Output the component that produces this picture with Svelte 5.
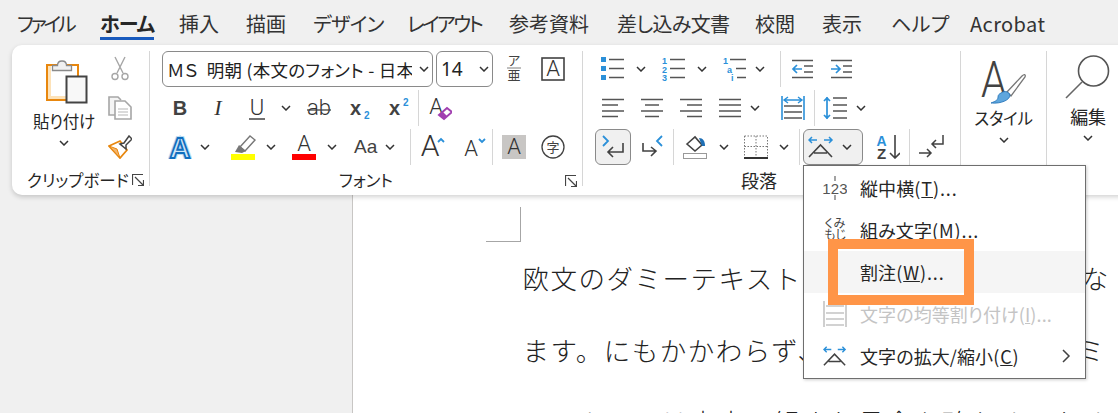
<script>
	// ink widths differ a lot per tab, so each one carries its own slot and tracking
	const tabs = [
		{ t: 'ファイル', w: 83, ls: -3.2 },
		{ t: 'ホーム', w: 79, ls: -1 },
		{ t: '挿入', w: 67, ls: 0 },
		{ t: '描画', w: 67, ls: 0 },
		{ t: 'デザイン', w: 94, ls: -0.6 },
		{ t: 'レイアウト', w: 102, ls: -2.6 },
		{ t: '参考資料', w: 108, ls: 0 },
		{ t: '差し込み文書', w: 138, ls: -0.7 },
		{ t: '校閲', w: 67, ls: 0 },
		{ t: '表示', w: 69, ls: 0 },
		{ t: 'ヘルプ', w: 79, ls: 0.5 },
		{ t: 'Acrobat', w: 90, ls: 0.4 }
	];
</script>

{#snippet chev()}
	<svg class="chev" width="10" height="6" viewBox="0 0 10 6"><path d="M1 1l4 4 4-4" fill="none" stroke="#333" stroke-width="1.5" /></svg>
{/snippet}

{#snippet launcher()}
	<svg class="launcher" width="12" height="12" viewBox="0 0 12 12"><path d="M.5 11V.5H11M3 3l8 8M11.5 6v5.5H6" fill="none" stroke="#444" stroke-width="1.2" /></svg>
{/snippet}

{#snippet lines(ys, x1, x2)}
	{#each ys as y}<path d="M{x1} {y}H{x2}" stroke="#555" stroke-width="1.5" />{/each}
{/snippet}

{#snippet letter(ch, cls = 'glyph', x = 12, y = 19)}
	<text {x} {y} class={cls} text-anchor="middle">{ch}</text>
{/snippet}

{#snippet wideA()}
	<path d="M1 5h8M4 2L1 5l3 3M24 5h-8M21 2l3 3-3 3" fill="none" stroke="#2b90d9" stroke-width="1.5" />
	<path d="M1 22L12.5 10 24 22M6 18h13" fill="none" stroke="#424242" stroke-width="1.6" />
{/snippet}

<div class="app">
	<nav class="tabs">
		{#each tabs as tab, i}
			<span class="slot" style:width="{tab.w}px">
				<span class="tab" class:active={i === 1} style:letter-spacing="{tab.ls}px">{tab.t}</span>
			</span>
		{/each}
	</nav>

	<div class="ribbon">
		<section class="group clip">
			<div class="body">
				<div class="big">
					<svg class="paste" width="42" height="46" viewBox="0 0 42 46">
						<rect x="1" y="7" width="31" height="35" fill="#fff" stroke="#e8870e" stroke-width="2" />
						<path d="M2 8h3v30h16v3H2z" fill="#fde2b8" />
						<path d="M6.5 12.5V7.5h5c0-6 9-6 9 0h5v5z" fill="#f0f0f0" stroke="#8a8a8a" stroke-width="1.3" />
						<rect x="20.5" y="18.5" width="20" height="26" fill="#f8f8f8" stroke="#444" stroke-width="2" />
					</svg>
					<span class="biglabel">貼り付け</span>
					{@render chev()}
				</div>
				<div class="small">
					<div class="row">
						<svg width="24" height="26" viewBox="0 0 24 26">
							<path d="M7 1l8 16M17 1L9 17" fill="none" stroke="#a6a6a6" stroke-width="1.4" />
							<circle cx="7" cy="20.5" r="3" fill="none" stroke="#a6a6a6" stroke-width="1.4" />
							<circle cx="17" cy="20.5" r="3" fill="none" stroke="#a6a6a6" stroke-width="1.4" />
						</svg>
					</div>
					<div class="row">
						<svg width="24" height="24" viewBox="0 0 24 24">
							<path d="M8 19H1V1h9l3 3" fill="#f4f4f4" stroke="#a6a6a6" stroke-width="1.6" />
							<path d="M7 5h10l6 6v12H7z" fill="#fff" stroke="#a6a6a6" stroke-width="1.6" />
							<path d="M10 13h10M10 16h10M10 19h10" stroke="#b5b5b5" stroke-width="1.2" />
						</svg>
					</div>
					<div class="row">
						<svg width="24" height="24" viewBox="0 0 24 24">
							<path d="M1 11l11-5 7 9-7 8z" fill="#fff" stroke="#e8870e" stroke-width="1.8" />
							<path d="M1 11l11 12-3-9z" fill="#f4b46c" stroke="#e8870e" stroke-width="1" />
							<path d="M12 9l4-1 5-7 3 3-6 6 0 4z" fill="#fff" stroke="#444" stroke-width="1.5" />
						</svg>
					</div>
				</div>
			</div>
			<div class="label"><span class="cliplabel">クリップボード</span>{@render launcher()}</div>
		</section>

		<section class="group font">
			<div class="row">
				<div class="select fontname m12"><span>ＭＳ&nbsp; 明朝 (本文のフォント - 日本語)</span>{@render chev()}</div>
				<div class="select fontsize m3"><span>14</span>{@render chev()}</div>
				<svg class="m14" width="14" height="30" viewBox="0 0 14 30">
					<text x="7" y="11" class="tiny" text-anchor="middle">ア</text>
					<path d="M0 14h14" stroke="#aaa" stroke-width="1.5" />
					<text x="7" y="26" class="tiny" text-anchor="middle">亜</text>
				</svg>
				<svg class="m20" width="24" height="24" viewBox="0 0 24 24">
					<rect x="1" y="1" width="22" height="22" fill="none" stroke="#424242" stroke-width="1.6" />
					{@render letter('A')}
				</svg>
			</div>
			<div class="row">
				<svg class="m18" width="24" height="24" viewBox="0 0 24 24">{@render letter('B', 'glyph bold')}</svg>
				<svg class="m14" width="24" height="24" viewBox="0 0 24 24">{@render letter('I', 'glyph ital')}</svg>
				<svg class="m15" width="24" height="24" viewBox="0 0 24 24">{@render letter('U')}<path d="M4 23h16" stroke="#424242" stroke-width="1.5" /></svg>
				<span class="m12">{@render chev()}</span>
				<svg class="m16" width="24" height="24" viewBox="0 0 24 24">{@render letter('ab')}<path d="M0 14h24" stroke="#424242" stroke-width="1.3" /></svg>
				<svg class="m18" width="24" height="24" viewBox="0 0 24 24">
					<text x="1" y="19" class="glyph bold">x</text><text x="15" y="23" class="sub">2</text>
				</svg>
				<svg class="m15" width="24" height="24" viewBox="0 0 24 24">
					<text x="1" y="19" class="glyph bold">x</text><text x="15" y="10" class="sub">2</text>
				</svg>
				<i class="sep m6"></i>
				<svg class="m9" width="24" height="26" viewBox="0 0 24 26">
					{@render letter('A', 'glyph', 8, 19)}
					<path d="M11 20l8-7 5 4-8 7z" fill="#fff" stroke="#a13fb0" stroke-width="2" />
					<path d="M11 20l4-3 4 4-3 3z" fill="#a13fb0" />
				</svg>
			</div>
			<div class="row">
				<svg class="m18" width="24" height="24" viewBox="0 0 24 24">
					<text x="12" y="22.5" class="halo" text-anchor="middle">A</text>
					<text x="12" y="22.5" class="outline" text-anchor="middle">A</text>
				</svg>
				<span class="m8">{@render chev()}</span>
				<svg class="m21" width="25" height="26" viewBox="0 0 25 26">
					<path d="M9 13L19 2l5 4-10 11z" fill="#fff" stroke="#777" stroke-width="1.4" />
					<path d="M4 18l4-7 7 6-4 2z" fill="#777" />
					<rect y="20" width="24" height="6" fill="#ffff00" />
				</svg>
				<span class="m10">{@render chev()}</span>
				<svg class="m16" width="24" height="26" viewBox="0 0 24 26">
					{@render letter('A', 'glyph', 12, 17)}
					<rect y="20" width="24" height="6" fill="#ff0000" />
				</svg>
				<span class="m11">{@render chev()}</span>
				<span class="aa m17">Aa</span>
				<span class="m7">{@render chev()}</span>
				<i class="sep m15"></i>
				<svg class="m10" width="24" height="24" viewBox="0 0 24 24">
					{@render letter('A', 'glyph large', 9, 21)}
					<path d="M17 7l3-3 3 3" fill="none" stroke="#2b90d9" stroke-width="1.8" />
				</svg>
				<svg class="m17" width="24" height="24" viewBox="0 0 24 24">
					{@render letter('A', 'glyph', 9, 21)}
					<path d="M17 4l3 3 3-3" fill="none" stroke="#2b90d9" stroke-width="1.8" />
				</svg>
				<i class="sep m6"></i>
				<svg class="m9" width="24" height="24" viewBox="0 0 24 24">
					<rect width="24" height="24" fill="#c8c6c4" />
					{@render letter('A', 'glyph', 12, 19)}
				</svg>
				<svg class="m15" width="24" height="24" viewBox="0 0 24 24">
					<circle cx="12" cy="12" r="11" fill="none" stroke="#424242" stroke-width="1.3" />
					<text x="12" y="17" class="tiny" text-anchor="middle">字</text>
				</svg>
			</div>
			<div class="label center"><span>フォント</span>{@render launcher()}</div>
		</section>

		<section class="group para">
			<div class="row">
				<svg class="m18" width="24" height="24" viewBox="0 0 24 24">
					<rect y="0" width="5" height="5" fill="#2b90d9" /><rect y="9" width="5" height="5" fill="#2b90d9" /><rect y="18" width="5" height="5" fill="#2b90d9" />
					{@render lines([2.5, 11.5, 20.5], 8, 23)}
				</svg>
				<span class="m11">{@render chev()}</span>
				<svg class="m16" width="24" height="24" viewBox="0 0 24 24">
					<text x="0" y="7" class="num">1</text><text x="0" y="16" class="num">2</text><text x="0" y="24" class="num">3</text>
					{@render lines([2.5, 11.5, 20.5], 8, 23)}
				</svg>
				<span class="m11">{@render chev()}</span>
				<svg class="m16" width="24" height="24" viewBox="0 0 24 24">
					<text x="0" y="7" class="num">1</text><text x="4" y="16" class="num">a</text><text x="8" y="24" class="num">i</text>
					{@render lines([2.5], 7, 23)}{@render lines([11.5], 13, 23)}{@render lines([20.5], 14, 23)}
				</svg>
				<span class="m8">{@render chev()}</span>
				<i class="sep m15"></i>
				<svg class="m10" width="24" height="20" viewBox="0 0 24 20">
					{@render lines([1.5, 18.5], 1, 22)}{@render lines([7, 13], 13, 22)}
					<path d="M11 10H2M6 6l-4 4 4 4" fill="none" stroke="#2b90d9" stroke-width="1.7" />
				</svg>
				<svg class="m15" width="24" height="20" viewBox="0 0 24 20">
					{@render lines([1.5, 18.5], 1, 22)}{@render lines([7, 13], 13, 22)}
					<path d="M1 10h9M6 6l4 4-4 4" fill="none" stroke="#2b90d9" stroke-width="1.7" />
				</svg>
			</div>
			<div class="row">
				<svg class="m18" width="24" height="20" viewBox="0 0 24 20">{@render lines([1.5, 13], 1, 23)}{@render lines([7, 18.5], 1, 17)}</svg>
				<svg class="m15" width="24" height="20" viewBox="0 0 24 20">{@render lines([1.5, 13], 1, 23)}{@render lines([7, 18.5], 5, 19)}</svg>
				<svg class="m15" width="24" height="20" viewBox="0 0 24 20">{@render lines([1.5, 13], 1, 23)}{@render lines([7, 18.5], 8, 23)}</svg>
				<svg class="m15" width="24" height="20" viewBox="0 0 24 20">{@render lines([1.5, 7, 13, 18.5], 1, 23)}</svg>
				<span class="m8">{@render chev()}</span>
				<svg class="m21" width="24" height="24" viewBox="0 0 24 24">
					<path d="M1 0v24M23 0v24" stroke="#2b90d9" stroke-width="1.6" />
					{@render lines([10, 16, 22], 3, 21)}
					<path d="M3 4h18M7 1L3 4l4 3M17 1l4 3-4 3" fill="none" stroke="#2b90d9" stroke-width="1.4" />
				</svg>
				<i class="sep m9"></i>
				<svg class="m8" width="24" height="24" viewBox="0 0 24 24">
					<path d="M4 1v22M1 5l3-3 3 3M1 19l3 3 3-3" fill="none" stroke="#2b90d9" stroke-width="1.7" />
					{@render lines([2, 9, 15, 22], 10, 24)}
				</svg>
				<span class="m9">{@render chev()}</span>
			</div>
			<div class="row">
				<div class="pressed square m12">
					<svg width="24" height="24" viewBox="0 0 24 24">
						<path d="M2 1l5 5-5 5" fill="none" stroke="#2b90d9" stroke-width="1.8" />
						<path d="M22 8v9H7M12 12l-5 5 5 5" fill="none" stroke="#424242" stroke-width="1.6" />
					</svg>
				</div>
				<svg class="m9" width="24" height="24" viewBox="0 0 24 24">
					<path d="M22 1l-5 5 5 5" fill="none" stroke="#2b90d9" stroke-width="1.8" />
					<path d="M3 8v8h13M11 12l5 4-5 5" fill="none" stroke="#424242" stroke-width="1.6" />
				</svg>
				<i class="sep m9"></i>
				<svg class="m9" width="25" height="24" viewBox="0 0 25 24">
					<path d="M4 9l8-7 7 8-7 6z" fill="#fff" stroke="#424242" stroke-width="1.6" />
					<path d="M16 3c4 0 6 3 6 8h-3z" fill="#1e6fb5" />
					<rect x=".5" y="18.5" width="23" height="5" fill="#fff" stroke="#999" />
				</svg>
				<span class="m11">{@render chev()}</span>
				<svg class="m15" width="24" height="24" viewBox="0 0 24 24">
					<path d="M.5 1h23v21M.5 1v21M12 1v21M.5 11.5h23" fill="none" stroke="#777" stroke-dasharray="1.5 1.5" />
					<path d="M0 23h24" stroke="#333" stroke-width="2" />
				</svg>
				<span class="m11">{@render chev()}</span>
				<i class="sep m10"></i>
				<div class="dropdown m3">
					<div class="pressed wide">
						<svg width="26" height="24" viewBox="0 0 26 24">{@render wideA()}</svg>
						{@render chev()}
					</div>
					<div class="menu">
						<div class="item">
							<svg width="24" height="24" viewBox="0 0 24 24">
								<path d="M12 0v5M12 19v5" stroke="#666" stroke-width="1.2" />
								<text x="12" y="18" class="menu123" text-anchor="middle">123</text>
							</svg>
							<span>縦中横<span class="key">(<u>T</u>)...</span></span>
						</div>
						<div class="item">
							<svg width="24" height="26" viewBox="0 0 24 26">
								<text x="12" y="10.5" class="kumi" text-anchor="middle">くみ</text>
								<text x="12" y="22" class="kumi" text-anchor="middle">もじ</text>
							</svg>
							<span>組み文字<span class="key">(<u>M</u>)...</span></span>
						</div>
						<div class="item hover"><span class="noicon">割注<span class="key">(<u>W</u>)...</span></span></div>
						<div class="item disabled">
							<svg width="24" height="26" viewBox="0 0 24 26">
								<path d="M1 0v26M23 0v26" stroke="#c4c4c4" stroke-width="1.6" />
								<path d="M3 5h18M3 12h18M3 18h18M3 24h18" stroke="#c4c4c4" stroke-width="1.5" />
							</svg>
							<span>文字の均等割り付け(<u>I</u>)...</span>
						</div>
						<div class="item">
							<svg width="24" height="24" viewBox="0 0 26 24">{@render wideA()}</svg>
							<span>文字の拡大/縮小<span class="key">(<u>C</u>)</span></span>
							<svg class="more" width="9" height="14" viewBox="0 0 9 14"><path d="M1 1l6 6-6 6" fill="none" stroke="#424242" stroke-width="1.5" /></svg>
						</div>
						<div class="callout"></div>
					</div>
				</div>
				<svg class="m13" width="24" height="24" viewBox="0 0 24 24">
					<text x="5.5" y="10.5" class="sortA" text-anchor="middle">A</text>
					<text x="5.5" y="24" class="sortZ" text-anchor="middle">Z</text>
					<path d="M19 0v23M14 18l5 5 5-5" fill="none" stroke="#424242" stroke-width="1.6" />
				</svg>
				<i class="sep m9"></i>
				<svg class="m9" width="26" height="24" viewBox="0 0 26 24">
					<path d="M24 0v9H13M17 5l-4 4 4 4" fill="none" stroke="#424242" stroke-width="1.5" />
					<path d="M0 18h12M8 14l4 4-4 4" fill="none" stroke="#424242" stroke-width="1.5" />
				</svg>
			</div>
			<div class="label"><span class="paralabel">段落</span></div>
		</section>

		<section class="group tall styles">
			<svg class="styleicon" width="48" height="48" viewBox="0 0 48 48">
				<text x="17" y="37" class="bigA" text-anchor="middle" transform="scale(.82 1)">A</text>
				<path d="M27 32L42 16c2-2 4-2 3 1L31 36z" fill="#fff" stroke="#777" stroke-width="1.3" />
				<path d="M21 33c4-3 8-1 9 2 0 5-9 9-19 8 5-2 7-3 7-6 0-2 1-3 3-4z" fill="#5ea6dd" stroke="#1e6fb5" stroke-width=".8" />
			</svg>
			<span class="biglabel">スタイル</span>
			{@render chev()}
		</section>

		<section class="group tall edit">
			<svg class="searchicon" width="46" height="45" viewBox="0 0 46 45">
				<circle cx="28.5" cy="16" r="15" fill="none" stroke="#555" stroke-width="1.6" />
				<path d="M17 27L1 43" stroke="#666" stroke-width="1.6" />
			</svg>
			<span class="biglabel editlabel">編集</span>
			{@render chev()}
		</section>
	</div>

	<main class="below">
		<div class="gutter"></div>
		<div class="page">
			<div class="cropmark"></div>
			<p>欧文のダミーテキストは意味のない文章ですな</p>
			<p>ます。にもかかわらず、独特の雰囲気ありダミ</p>
			<p>ーテキストは文字の組まれ具合を確かめるために</p>
		</div>
	</main>
</div>

<style>
	:global(body) {
		margin: 0;
		background: #f0f0f0;
	}
	.app {
		width: 1118px;
		height: 413px;
		overflow: hidden;
		position: relative;
		background: #f0f0f0;
		color: #262626;
		font-family: "Noto Sans CJK JP", "Noto Sans", sans-serif;
		font-feature-settings: "palt";
	}
	.tabs {
		display: flex;
		height: 45px;
		padding-left: 17px;
		font-size: 20px;
	}
	.slot {
		flex: none;
	}
	.tab {
		display: inline-block;
		line-height: 47px;
		height: 37px;
		overflow: visible;
		color: #333;
		white-space: nowrap;
	}
	.tab.active {
		font-weight: 700;
		color: #262626;
		border-bottom: 3px solid #185abd;
	}
	.ribbon {
		position: relative;
		z-index: 2;
		display: flex;
		margin-left: 12px;
		width: 1120px;
		height: 150px;
		box-sizing: border-box;
		padding: 6px 0 9px;
		background: #fff;
		border-radius: 10px 0 0 10px;
		box-shadow: 0 2px 5px rgba(0, 0, 0, 0.18);
	}
	.group {
		display: flex;
		flex-direction: column;
		gap: 3px;
		border-right: 1px solid #d6d6d6;
		box-sizing: border-box;
	}
	.clip {
		width: 138px;
		gap: 0;
	}
	.font {
		width: 433px;
	}
	.para {
		width: 378px;
	}
	.body {
		display: flex;
		height: 114px;
	}
	.big {
		width: 88px;
		margin-left: 8px;
		display: flex;
		flex-direction: column;
		align-items: center;
	}
	.paste {
		margin: 7px 0 0 5px;
	}
	.biglabel {
		font-size: 16.5px;
		line-height: 20px;
		margin-top: 7px;
		letter-spacing: -0.2px;
	}
	.big .chev,
	.tall .chev {
		margin-top: 9px;
	}
	.small {
		display: flex;
		flex-direction: column;
		gap: 3px;
	}
	.row {
		display: flex;
		align-items: center;
		height: 36px;
		flex: none;
	}
	.label {
		height: 21px;
		margin-top: 1px;
		padding-top: 1px;
		box-sizing: border-box;
		font-size: 16.5px;
		line-height: 22px;
		display: flex;
		align-items: center;
	}
	.clip .label {
		margin-top: 0;
		padding-top: 9px;
	}
	.cliplabel {
		margin-left: 15px;
		width: 105px;
		white-space: nowrap;
	}
	.center {
		justify-content: center;
		position: relative;
	}
	.launcher {
		flex: none;
	}
	.center .launcher {
		position: absolute;
		right: 5px;
		top: 6px;
	}
	.paralabel {
		margin-left: 158px;
		font-size: 18px;
	}
	.select {
		box-sizing: border-box;
		height: 36px;
		border: 1px solid #8a8a8a;
		border-radius: 6px;
		display: flex;
		align-items: center;
		font-size: 17.5px;
		color: #222;
		flex: none;
		padding: 0 3px 0 4px;
		white-space: nowrap;
	}
	.select span {
		flex: 1;
		overflow: hidden;
	}
	.fontname {
		width: 271px;
		letter-spacing: 0.3px;
	}
	.fontname span {
		margin-right: 7px;
	}
	.fontsize {
		width: 57px;
		font-family: "Noto Sans", sans-serif;
		font-size: 19px;
	}
	.sep {
		display: block;
		width: 1px;
		height: 36px;
		background: #d6d6d6;
		flex: none;
	}
	svg {
		display: block;
		flex: none;
	}
	.row > span {
		display: block;
	}
	.aa {
		width: 24px;
		font-family: "Liberation Sans", sans-serif;
		font-size: 19px;
		color: #424242;
	}
	.pressed {
		box-sizing: border-box;
		height: 36px;
		background: #f0f0f0;
		border: 1px solid #8a8a8a;
		border-radius: 6px;
		display: flex;
		align-items: center;
	}
	.square {
		width: 36px;
		justify-content: center;
		flex: none;
	}
	.wide {
		width: 60px;
		padding-left: 4px;
		gap: 8px;
	}
	.dropdown {
		position: relative;
		flex: none;
	}
	.menu {
		position: absolute;
		top: 100%;
		left: 0;
		width: 283px;
		box-sizing: border-box;
		background: #fff;
		border: 1px solid #6e6e6e;
		padding: 1px 0;
		box-shadow: 1px 1px 3px rgba(0, 0, 0, 0.2);
		z-index: 5;
		font-size: 18px;
		color: #262626;
	}
	.item {
		height: 42px;
		display: flex;
		align-items: center;
		padding-left: 19px;
		gap: 13px;
		white-space: nowrap;
		position: relative;
		letter-spacing: 0.1px;
	}
	.key {
		letter-spacing: 0.9px;
	}
	.hover {
		background: #f5f5f5;
	}
	.noicon {
		margin-left: 37px;
	}
	.disabled {
		color: #c4c4c4;
	}
	.more {
		position: absolute;
		right: 14px;
		top: 14px;
	}
	.callout {
		position: absolute;
		left: 24px;
		top: 73px;
		width: 146px;
		height: 66px;
		box-sizing: border-box;
		border: 10px solid #ff9548;
	}
	.tall {
		gap: 0;
		align-items: center;
	}
	.styles {
		width: 86px;
	}
	.edit {
		border-right: 0;
		width: 72px;
		padding-left: 10px;
	}
	.styleicon {
		margin-top: 9px;
	}
	.styles .biglabel {
		margin-top: 0;
	}
	.searchicon {
		margin-top: 4px;
	}
	.editlabel {
		margin-top: 6px;
		font-size: 18px;
	}
	.below {
		display: flex;
		height: 218px;
	}
	.gutter {
		width: 352px;
		flex: none;
		border-right: 1px solid #c8c6c4;
	}
	.page {
		flex: 1;
		background: #fff;
		overflow: hidden;
		font-family: "Liberation Serif", "Noto Sans CJK JP", serif;
		color: #222;
	}
	.cropmark {
		width: 35px;
		height: 35px;
		margin: 12px 0 0 133px;
		border-right: 1px solid #a6a6a6;
		border-bottom: 1px solid #a6a6a6;
		box-sizing: border-box;
	}
	p {
		margin: 0 0 0 169.5px;
		font-size: 26.5px;
		letter-spacing: 1.5px;
		line-height: 72px;
		font-weight: 300;
		white-space: nowrap;
		font-feature-settings: normal;
	}
	p:first-of-type {
		margin-top: 2px;
	}
	text {
		font-family: "Liberation Sans", sans-serif;
	}
	.glyph {
		font-family: Roboto, sans-serif;
		font-weight: 300;
		font-size: 22px;
		fill: #333;
	}
	.bold {
		font-family: "Liberation Sans", sans-serif;
		font-size: 20px;
		font-weight: 700;
		fill: #424242;
	}
	.ital {
		font-style: italic;
		font-family: "Liberation Serif", serif;
		font-weight: 400;
	}
	.large {
		font-size: 30px;
	}
	.halo {
		font-size: 29px;
		font-weight: 700;
		fill: none;
		stroke: #bcdcf3;
		stroke-width: 4px;
	}
	.outline {
		font-size: 29px;
		font-weight: 700;
		fill: #cfe6f7;
		stroke: #106ebe;
		stroke-width: 1.8px;
	}
	.sub {
		font-size: 10px;
		font-weight: 700;
		fill: #2b90d9;
	}
	.num {
		font-size: 9px;
		font-weight: 700;
		fill: #2b90d9;
	}
	.tiny {
		font-family: "Noto Sans CJK JP", sans-serif;
		font-size: 13px;
		fill: #424242;
	}
	.menu123 {
		font-size: 15px;
		fill: #555;
	}
	.kumi {
		font-family: "Noto Sans CJK JP", sans-serif;
		font-size: 12px;
		fill: #444;
	}
	.sortA {
		font-size: 14px;
		font-weight: 700;
		fill: #2b90d9;
	}
	.sortZ {
		font-size: 15px;
		font-weight: 700;
		fill: #424242;
	}
	.bigA {
		font-family: Roboto, sans-serif;
		font-weight: 300;
		font-size: 50px;
		fill: #424242;
	}
	.m3 { margin-left: 3px; }
	.m6 { margin-left: 6px; }
	.m7 { margin-left: 7px; }
	.m8 { margin-left: 8px; }
	.m9 { margin-left: 9px; }
	.m10 { margin-left: 10px; }
	.m11 { margin-left: 11px; }
	.m12 { margin-left: 12px; }
	.m13 { margin-left: 13px; }
	.m14 { margin-left: 14px; }
	.m15 { margin-left: 15px; }
	.m16 { margin-left: 16px; }
	.m17 { margin-left: 17px; }
	.m18 { margin-left: 18px; }
	.m20 { margin-left: 20px; }
	.m21 { margin-left: 21px; }
</style>
